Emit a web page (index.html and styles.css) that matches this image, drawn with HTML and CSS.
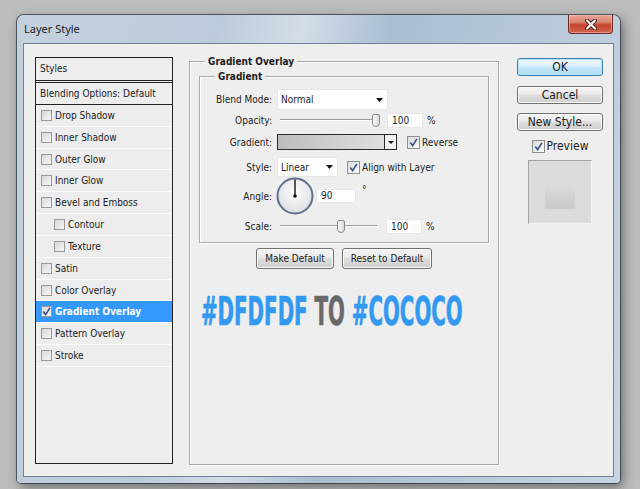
FILE: index.html
```html
<!DOCTYPE html>
<html lang="en">
<head>
    <meta charset="utf-8" />
    <title>Layer Style</title>
    <link rel="stylesheet" href="styles.css">
</head>
<body>
    <div class="window">
        <!-- 標題列 -->
        <div class="titlebar">
            <span class="title">Layer Style</span>
            <div class="close">
                <svg width="14" height="11" viewBox="0 0 14 11">
                    <path d="M3 1.5L11 9.5M11 1.5L3 9.5" stroke="#4b1b12" stroke-width="4" stroke-linecap="round" />
                    <path d="M3 1.5L11 9.5M11 1.5L3 9.5" stroke="#fff" stroke-width="2.2" stroke-linecap="round" />
                </svg>
            </div>
        </div>

        <div class="client">
            <!-- 左側樣式清單 -->
            <div class="styles-list">
                <div class="list-head">Styles</div>
                <div class="list-blend">Blending Options: Default</div>
                <div class="list-item"><span class="box"></span>Drop Shadow</div>
                <div class="list-item"><span class="box"></span>Inner Shadow</div>
                <div class="list-item"><span class="box"></span>Outer Glow</div>
                <div class="list-item"><span class="box"></span>Inner Glow</div>
                <div class="list-item"><span class="box"></span>Bevel and Emboss</div>
                <div class="list-item sub"><span class="box"></span>Contour</div>
                <div class="list-item sub"><span class="box"></span>Texture</div>
                <div class="list-item"><span class="box"></span>Satin</div>
                <div class="list-item"><span class="box"></span>Color Overlay</div>
                <div class="list-item active">
                    <span class="box">
                        <svg width="9" height="9" viewBox="0 0 9 9"><path d="M1.3 4.6L3.6 7.6L7.9 0.9" stroke="#3d5288" stroke-width="1.7" fill="none" /></svg>
                    </span>Gradient Overlay
                </div>
                <div class="list-item"><span class="box"></span>Pattern Overlay</div>
                <div class="list-item"><span class="box"></span>Stroke</div>
            </div>

            <!-- 中間設定區 -->
            <div class="main">
                <div class="group group-outer">
                    <div class="legend">Gradient Overlay</div>
                    <div class="group group-inner">
                        <div class="legend legend-inner">Gradient</div>

                        <div class="row row-blend">
                            <span class="label">Blend Mode:</span>
                            <div class="select select-blend">
                                <span>Normal</span>
                                <svg width="7" height="4" viewBox="0 0 7 4"><path d="M0 0H7L3.5 4Z" fill="#111" /></svg>
                            </div>
                        </div>

                        <div class="row row-opacity">
                            <span class="label">Opacity:</span>
                            <div class="slider slider-opacity">
                                <div class="track"></div>
                                <div class="thumb"></div>
                            </div>
                            <div class="num num-opacity">100</div>
                            <span class="unit">%</span>
                        </div>

                        <div class="row row-gradient">
                            <span class="label">Gradient:</span>
                            <div class="grad">
                                <div class="grad-fill"></div>
                                <div class="grad-arrow">
                                    <svg width="6" height="3" viewBox="0 0 6 3"><path d="M0 0H6L3 3Z" fill="#111" /></svg>
                                </div>
                            </div>
                            <span class="chk chk-reverse">
                                <svg width="9" height="9" viewBox="0 0 9 9"><path d="M1.3 4.6L3.6 7.6L7.9 0.9" stroke="#3d5288" stroke-width="1.7" fill="none" /></svg>
                            </span>
                            <span class="chk-text">Reverse</span>
                        </div>

                        <div class="row row-style">
                            <span class="label">Style:</span>
                            <div class="select select-style">
                                <span>Linear</span>
                                <svg width="7" height="4" viewBox="0 0 7 4"><path d="M0 0H7L3.5 4Z" fill="#111" /></svg>
                            </div>
                            <span class="chk chk-align">
                                <svg width="9" height="9" viewBox="0 0 9 9"><path d="M1.3 4.6L3.6 7.6L7.9 0.9" stroke="#3d5288" stroke-width="1.7" fill="none" /></svg>
                            </span>
                            <span class="chk-text">Align with Layer</span>
                        </div>

                        <div class="row row-angle">
                            <span class="label">Angle:</span>
                            <svg class="dial" width="38" height="38" viewBox="0 0 38 38">
                                <defs>
                                    <radialGradient id="dialFill" cx="50%" cy="40%" r="60%">
                                        <stop offset="0" stop-color="#ffffff" />
                                        <stop offset="1" stop-color="#dcdde2" />
                                    </radialGradient>
                                </defs>
                                <circle cx="19" cy="19" r="17.5" fill="url(#dialFill)" stroke="#5f6f92" stroke-width="2" />
                                <path d="M19 19V2.5" stroke="#111" stroke-width="1.4" />
                                <circle cx="19" cy="19" r="1.8" fill="#111" />
                            </svg>
                            <div class="num num-angle">90</div>
                            <span class="degree">°</span>
                        </div>

                        <div class="row row-scale">
                            <span class="label">Scale:</span>
                            <div class="slider slider-scale">
                                <div class="track track-left"></div>
                                <div class="thumb"></div>
                                <div class="track"></div>
                            </div>
                            <div class="num num-scale">100</div>
                            <span class="unit">%</span>
                        </div>
                    </div>

                    <div class="btn-row">
                        <div class="btn btn-make">Make Default</div>
                        <div class="btn btn-reset">Reset to Default</div>
                    </div>

                    <div class="hex"><span class="hex-blue">#DFDFDF</span> <span class="hex-gray">TO</span> <span class="hex-blue">#COCOCO</span></div>
                </div>
            </div>

            <!-- 右側按鈕 -->
            <div class="side">
                <div class="btn btn-side btn-ok">OK</div>
                <div class="btn btn-side btn-cancel">Cancel</div>
                <div class="btn btn-side btn-new">New Style...</div>
                <div class="preview-row">
                    <span class="chk">
                        <svg width="9" height="9" viewBox="0 0 9 9"><path d="M1.3 4.6L3.6 7.6L7.9 0.9" stroke="#3d5288" stroke-width="1.7" fill="none" /></svg>
                    </span>
                    <span class="preview-text">Preview</span>
                </div>
                <div class="preview">
                    <div class="preview-swatch"></div>
                </div>
            </div>
        </div>
    </div>
</body>
</html>
```

FILE: styles.css
```css
body {
    margin: 0;
    width: 640px;
    height: 489px;
    box-sizing: border-box;
    padding: 15px 0 0 17px;
    overflow: hidden;
    background: #bdbdbd;
    font-family: "DejaVu Sans Condensed", "DejaVu Sans", sans-serif;
    font-size: 10px;
    color: #1c1c1c;
}

.window {
    width: 603px;
    height: 468px;
    box-sizing: border-box;
    padding: 0 6px 6px;
    border-radius: 7px 7px 4px 4px;
    background: linear-gradient(100deg, #c3d1df 0%, #bccbdb 30%, #d3dde8 42%, #a9bdd3 55%, #b7c8da 75%, #c8d5e2 100%);
    box-shadow: 0 0 0 1px rgba(45, 55, 70, 0.75), 3px 4px 12px rgba(0, 0, 0, 0.45);
}

.titlebar {
    height: 28px;
    display: flex;
    justify-content: space-between;
    align-items: flex-start;
}

.title {
    padding-left: 1px;
    font-family: "Noto Sans", sans-serif;
    font-size: 11px;
    line-height: 28px;
    color: #1e1e1e;
}

.close {
    width: 45px;
    height: 19px;
    margin-right: 1px;
    box-sizing: border-box;
    border: 1px solid #6b2a20;
    border-top: none;
    border-radius: 0 0 4px 4px;
    background: linear-gradient(#e6a797 0%, #d9826f 40%, #c4442e 55%, #cf6450 100%);
    box-shadow: inset 0 0 0 1px rgba(255, 200, 190, 0.5);
    display: flex;
    align-items: center;
    justify-content: center;
}

.client {
    height: 434px;
    box-sizing: border-box;
    border: 1px solid #6d8299;
    background: #eeeeee;
    display: flex;
    align-items: flex-start;
    padding: 13px 0 0 11px;
}

/* 左側清單 */
.styles-list {
    width: 138px;
    height: 407px;
    box-sizing: border-box;
    border: 1px solid #222;
    margin-right: 16px;
    background: #ededed;
}

.list-head {
    height: 22px;
    line-height: 22px;
    padding-left: 4px;
    border-bottom: 3px double #222;
}

.list-blend {
    height: 21px;
    line-height: 21px;
    padding-left: 4px;
    border-bottom: 1px solid #222;
}

.list-item {
    height: 20.83px;
    border-bottom: 1px solid #fbfbfb;
    display: flex;
    align-items: center;
    padding-left: 5px;
}

.list-item.sub {
    padding-left: 18px;
}

.list-item.active {
    background: #3399ff;
    color: #fff;
    font-weight: bold;
}

.box {
    width: 11px;
    height: 11px;
    box-sizing: border-box;
    margin-right: 3px;
    border: 1px solid #9a9a9a;
    background: linear-gradient(135deg, #d8d8d8, #f6f6f6);
    display: flex;
    align-items: center;
    justify-content: center;
}

/* 群組框 */
.main {
    width: 310px;
    margin-top: 4px;
}

.group {
    box-sizing: border-box;
    border: 1px solid #a9a9a9;
    box-shadow: inset 1px 1px 0 #fff, 1px 1px 0 #fff;
}

.group-outer {
    height: 404px;
    padding: 0 9px;
}

.group-inner {
    height: 167px;
    margin-top: 8px;
}

.legend {
    width: max-content;
    margin: -7px 0 0 6px;
    padding: 0 3px;
    background: #eeeeee;
    font-weight: bold;
    line-height: 13px;
}

.legend-inner {
    margin-left: 15px;
}

.row {
    display: flex;
    align-items: center;
}

.label {
    width: 72px;
    margin-right: 5px;
    text-align: right;
}

.row-blend {
    height: 21px;
    margin-top: 6px;
}

.row-opacity {
    height: 20px;
}

.row-gradient {
    height: 20px;
    margin-top: 2px;
}

.row-style {
    height: 20px;
    margin-top: 5px;
}

.row-angle {
    height: 38px;
}

.row-scale {
    height: 18px;
    margin-top: 2px;
}

.select {
    height: 21px;
    box-sizing: border-box;
    padding: 0 4px 0 3px;
    background: #fff;
    border: 1px solid #e6e6e6;
    display: flex;
    align-items: center;
    justify-content: space-between;
}

.select-blend {
    width: 111px;
}

.select-style {
    width: 61px;
    height: 20px;
}

.slider {
    height: 13px;
    display: flex;
    align-items: center;
    padding-left: 3px;
}

.slider-opacity {
    width: 100px;
}

.slider-scale {
    width: 97px;
}

.track {
    flex: 1;
    height: 0;
    border-top: 1px solid #9c9c9c;
    border-bottom: 1px solid #fff;
}

.track-left {
    flex: none;
    width: 57px;
}

.thumb {
    width: 8px;
    height: 13px;
    box-sizing: border-box;
    border: 1px solid #8a8a8a;
    border-radius: 2px 2px 4px 4px;
    background: linear-gradient(to right, #fdfdfd, #d9d9d9);
}

.num {
    width: 36px;
    height: 15px;
    box-sizing: border-box;
    padding-left: 4px;
    line-height: 13px;
    background: #fff;
    border: 1px solid #e6e6e6;
}

.num-opacity {
    margin-left: 7px;
}

.num-scale {
    margin-left: 9px;
}

.num-angle {
    width: 40px;
    height: 14px;
    line-height: 12px;
    margin-left: 2px;
}

.unit {
    margin-left: 4px;
}

.degree {
    margin: 0 0 14px 6px;
}

.dial {
    margin-left: -1px;
}

.grad {
    width: 120px;
    height: 16px;
    box-sizing: border-box;
    border: 1px solid #2b2b2b;
    display: flex;
}

.grad-fill {
    flex: 1;
    background: linear-gradient(to right, #bdbdbd, #dfdfdf);
}

.grad-arrow {
    width: 11px;
    border-left: 1px solid #2b2b2b;
    background: #f3f3f3;
    display: flex;
    align-items: center;
    justify-content: center;
}

.chk {
    width: 13px;
    height: 13px;
    box-sizing: border-box;
    border: 1px solid #8e8f8f;
    background: linear-gradient(135deg, #dadada, #fdfdfd);
    display: flex;
    align-items: center;
    justify-content: center;
}

.chk-reverse {
    margin-left: 10px;
}

.chk-align {
    margin-left: 9px;
}

.chk-text {
    margin-left: 2px;
}

/* 按鈕 */
.btn {
    box-sizing: border-box;
    border: 1px solid #707070;
    border-radius: 3px;
    background: linear-gradient(#f3f3f3 0%, #ebebeb 45%, #dddddd 50%, #cfcfcf 100%);
    box-shadow: inset 0 0 0 1px #fbfbfb;
    display: flex;
    align-items: center;
    justify-content: center;
}

.btn-row {
    display: flex;
    justify-content: center;
    gap: 8px;
    margin-top: 5px;
}

.btn-make {
    width: 78px;
    height: 21px;
}

.btn-reset {
    width: 90px;
    height: 21px;
}

.hex {
    margin: 23px 0 0 2px;
    font-family: "DejaVu Sans Condensed", "DejaVu Sans", sans-serif;
    font-weight: bold;
    font-size: 39px;
    line-height: 40px;
    white-space: nowrap;
    -webkit-text-stroke: 0.7px;
    transform: scaleX(0.565);
    transform-origin: left center;
}

.hex-blue {
    color: #3399f0;
}

.hex-gray {
    color: #696969;
}

/* 右側 */
.side {
    width: 86px;
    margin: 1px 0 0 18px;
}

.btn-side {
    height: 18px;
    font-size: 12px;
}

.btn-ok {
    border-color: #3c7fb1;
    background: linear-gradient(#ecf7fd 0%, #dcf1fc 45%, #c3e7fb 50%, #afdcf5 100%);
    box-shadow: inset 0 0 0 1px #b8e4fa;
}

.btn-cancel {
    margin-top: 10px;
}

.btn-new {
    margin-top: 9px;
}

.preview-row {
    height: 14px;
    margin-top: 8px;
    display: flex;
    align-items: center;
    justify-content: center;
}

.preview-text {
    margin-left: 2px;
    font-size: 12px;
}

.preview {
    width: 64px;
    height: 64px;
    box-sizing: border-box;
    margin: 7px auto 0;
    padding-top: 21px;
    border: 1px solid;
    border-color: #a3a3a3 #f6f6f6 #f6f6f6 #a3a3a3;
    background: #dcdcdc;
}

.preview-swatch {
    width: 30px;
    height: 27px;
    margin: 0 auto;
    background: linear-gradient(#dedede, #c9c9c9);
}
```
